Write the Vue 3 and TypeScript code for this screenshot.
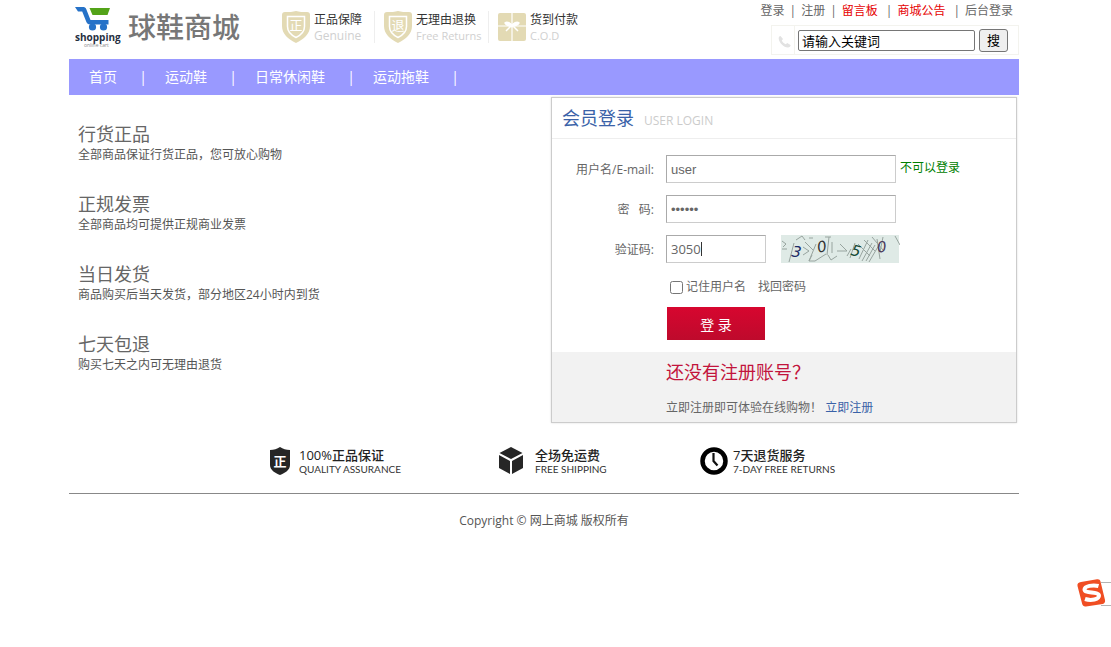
<script setup lang="ts">
import { ref } from 'vue'

interface NavLink {
  label: string
  hot?: boolean
}

const topLinks: NavLink[] = [
  { label: '登录' },
  { label: '注册' },
  { label: '留言板', hot: true },
  { label: '商城公告', hot: true },
  { label: '后台登录' },
]

const categories: string[] = ['首页', '运动鞋', '日常休闲鞋', '运动拖鞋']

const features = [
  { title: '行货正品', text: '全部商品保证行货正品，您可放心购物' },
  { title: '正规发票', text: '全部商品均可提供正规商业发票' },
  { title: '当日发货', text: '商品购买后当天发货，部分地区24小时内到货' },
  { title: '七天包退', text: '购买七天之内可无理由退货' },
]

const promises = [
  { icon: 'shield', mark: '正', title: '正品保障', sub: 'Genuine' },
  { icon: 'shield', mark: '退', title: '无理由退换', sub: 'Free Returns' },
  { icon: 'gift', mark: '', title: '货到付款', sub: 'C.O.D' },
]

const keyword = ref('请输入关键词')
const username = ref('user')
const password = ref('123456')
const code = ref('3050')
const remember = ref(false)
</script>

<template>
  <div class="page">
    <header class="header">
      <a class="brand" href="#">
        <svg class="logo" viewBox="0 0 46 42" width="46" height="42" aria-hidden="true">
          <path d="M0 1h8.500c1.500 0 2.300 1 2.800 2.200L15.500 14h18v4.500H15c-2 0-2.900-.9-3.600-2.400L7.200 5.500H3z" fill="#2672c8" />
          <path d="M14.500 2h20.500l-2.500 7H17.500z" fill="#53a318" />
          <circle cx="17.500" cy="21" r="3.600" fill="#2672c8" />
          <circle cx="28.500" cy="21" r="3.600" fill="#2672c8" />
          <text x="0" y="35" class="logo-name">shopping</text>
          <text x="9" y="41" class="logo-sub">online cart</text>
        </svg>
        <span class="brand-name">球鞋商城</span>
      </a>

      <ul class="promises">
        <li v-for="p in promises" :key="p.title">
          <svg v-if="p.icon === 'shield'" width="28" height="32" viewBox="0 0 28 32" aria-hidden="true">
            <path d="M3 1c4 0 8 0 11-1 3 1 7 1 11 1 2 0 3 1 3 3v11c0 8-6 13-14 17C6 28 0 23 0 15V4c0-2 1-3 3-3z" fill="#e3dab4" />
            <path d="M5.500 5.500h17v10c0 5-3.500 8.500-8.500 11-5-2.500-8.500-6-8.500-11z" fill="none" stroke="#fff" stroke-width="1.500" />
            <text x="14" y="19" class="shield-mark">{{ p.mark }}</text>
          </svg>
          <svg v-else width="28" height="32" viewBox="0 0 28 32" aria-hidden="true">
            <rect y="2" width="28" height="28" rx="2" fill="#e3dab4" />
            <path d="M14 2v28M0 15h28" stroke="#fff" stroke-width="1.200" />
            <path d="M14 15c-1-3-5-5-7-3 1 2 4 3 7 3 3 0 6-1 7-3-2-2-6 0-7 3zM13 15l-5 5M15 15l5 5" fill="#fff" stroke="#fff" stroke-width="1.500" />
          </svg>
          <span class="promise-text">
            <span class="promise-title">{{ p.title }}</span>
            <span class="promise-sub">{{ p.sub }}</span>
          </span>
        </li>
      </ul>

      <div class="tools">
        <nav class="top-links">
          <template v-for="(l, i) in topLinks" :key="l.label">
            <span v-if="i > 0">|</span>
            <a href="#" :class="{ hot: l.hot }">{{ l.label }}</a>
          </template>
        </nav>
        <form class="search" @submit.prevent>
          <svg width="22" height="28" viewBox="0 0 22 28" aria-hidden="true">
            <path d="M8.500 10l2.500 3-1.200 1.500c.8 1.800 2 3 4 3.800l1.400-1.300 3.300 2c.2 1.500-1 2.500-2.500 2.500-4.500-.2-8.800-4.500-9.300-9 0-1.300.6-2.300 1.800-2.500z" fill="#e2e2e2" />
          </svg>
          <input v-model="keyword" type="text" aria-label="关键词" />
          <button type="submit">搜</button>
        </form>
      </div>
    </header>

    <nav class="main-nav">
      <template v-for="c in categories" :key="c">
        <a href="#">{{ c }}</a><span>|</span>
      </template>
    </nav>

    <main class="content">
      <section class="features">
        <article v-for="f in features" :key="f.title">
          <h2>{{ f.title }}</h2>
          <p>{{ f.text }}</p>
        </article>
      </section>

      <section class="panel">
        <header class="panel-head">
          <h1>会员登录</h1>
          <span>USER LOGIN</span>
        </header>
        <form class="login" @submit.prevent>
          <div class="row">
            <label for="user">用户名/E-mail:</label>
            <input id="user" v-model="username" class="wide" type="text" />
            <span class="hint">不可以登录</span>
          </div>
          <div class="row">
            <label for="pass">密&nbsp;&nbsp;&nbsp;码:</label>
            <input id="pass" v-model="password" class="wide" type="password" />
          </div>
          <div class="row">
            <label for="code">验证码:</label>
            <span class="code-field">
              <input id="code" v-model="code" type="text" />
              <i class="caret"></i>
            </span>
            <svg class="captcha" width="119" height="28" viewBox="0 0 119 28" role="img" aria-label="验证码">
              <rect width="118" height="28" fill="#dfeae6" />
              <path d="M1 6l4 3-3 3M1 14h5M8 27l5-19M15 5l6-4 3 4M22 12l6 4-6 4M24 7l8 8M28 26l7-17M31 20l-3 6h6l11-7M46 20l2-18M51 18V7M47 20l3 5 6-4M56 16h10l-7-7M66 21l4-7M69 23l5-15M78 24l9-19M81 26l10-18M85 26l9-16M88 27l10-17M77 9l12 12M83 5l11 11M91 2l11 13M96 4l3 20M102 2l-3 15M114 1l5 9M28 3h4M44 2h6" stroke="#98a49f" fill="none" />
              <text x="11" y="22" class="digit navy" transform="rotate(9 15 16)">3</text>
              <text x="36" y="17" class="digit" transform="rotate(-12 40 12)">0</text>
              <text x="70" y="21" class="digit green" transform="rotate(14 75 16)">5</text>
              <text x="96" y="17" class="digit purple" transform="rotate(-8 101 12)">0</text>
            </svg>
          </div>
          <div class="options">
            <input id="remember" v-model="remember" type="checkbox" />
            <label for="remember">记住用户名</label>
            <a href="#">找回密码</a>
          </div>
          <button class="submit" type="submit">登 录</button>
        </form>
        <div class="register">
          <h2>还没有注册账号？</h2>
          <p>立即注册即可体验在线购物！ <a href="#">立即注册</a></p>
        </div>
      </section>
    </main>

    <ul class="services">
      <li>
        <svg width="22" height="28" viewBox="0 0 22 28" aria-hidden="true">
          <path d="M11 0c3 2 6 3 10 3v15c0 5-5 8-10 10C6 26 1 23 1 18V3c4 0 7-1 10-3z" fill="#262626" />
          <text x="11" y="19" class="dark-mark">正</text>
        </svg>
        <span><b>100%正品保证</b><small>QUALITY ASSURANCE</small></span>
      </li>
      <li>
        <svg width="26" height="28" viewBox="0 0 26 28" aria-hidden="true">
          <path d="M13 0l11.500 6L13 12 1.500 6zM1 8l11 6v13L1 21zM25 8l-11 6v13l11-6z" fill="#262626" />
        </svg>
        <span><b>全场免运费</b><small>FREE SHIPPING</small></span>
      </li>
      <li>
        <svg width="28" height="28" viewBox="0 0 28 28" aria-hidden="true">
          <circle cx="14" cy="14" r="11.500" fill="#fff" stroke="#000" stroke-width="4.500" />
          <path d="M13.500 6v8l4 4.500" fill="none" stroke="#111" stroke-width="2.200" />
        </svg>
        <span><b>7天退货服务</b><small>7-DAY FREE RETURNS</small></span>
      </li>
    </ul>

    <footer class="footer">Copyright © 网上商城 版权所有</footer>

    <svg class="ime" width="36" height="30" viewBox="0 0 36 30" aria-hidden="true">
      <path d="M26 4.500h10M26 27.500h10" stroke="#b4b4b4" />
      <path d="M6 4L22 1.200c2-.3 3 .5 3.500 2.300L30 22c.4 2-.4 3.500-2.300 4L11 28.500c-2 .3-3.300-.5-3.800-2.400L2.500 8c-.5-2.200.9-3.600 3.500-4z" fill="#f04e23" />
      <path d="M23.500 8C18 6.500 9.500 8 9.500 11.500c0 4.500 14 1.500 14.500 6 .3 4-8 5.500-14 3.500" fill="none" stroke="#fff" stroke-width="4" />
    </svg>
  </div>
</template>

<style>
body {
  margin: 0;
  background: #fff;
}
</style>

<style scoped>
.page {
  max-width: 950px;
  margin: 0 auto;
  padding-right: 23px;
  color: #666;
  font-family: "Open Sans", "Noto Sans CJK SC", sans-serif;
  font-size: 12px;
  line-height: 20px;
}

a {
  color: inherit;
  text-decoration: none;
}

ul {
  list-style: none;
  margin: 0;
  padding: 0;
}

h1,
h2,
p {
  margin: 0;
  font-weight: 400;
}

input,
button {
  box-sizing: border-box;
  font-family: inherit;
  margin: 0;
}

.header {
  display: flex;
  align-items: flex-start;
  height: 59px;
}

.brand {
  display: flex;
  gap: 7px;
  padding: 6px 0 0 6px;
}

.logo-name {
  font: 700 10px "Open Sans", sans-serif;
  fill: #26303f;
}

.logo-sub {
  font: 5px "Open Sans", sans-serif;
  fill: #888;
}

.brand-name {
  font-size: 28px;
  line-height: 42px;
  font-weight: 500;
  color: #777;
}

.promises {
  display: grid;
  grid-template-columns: 102px 114px auto;
  margin: 11px 0 0 42px;
}

.promises li {
  display: flex;
  gap: 4px;
  margin-right: 9px;
  border-right: 1px solid #eee;
}

.promises li:last-child {
  border-right: 0;
}

.promise-text {
  display: flex;
  flex-direction: column;
}

.promise-title {
  color: #333;
  line-height: 18px;
}

.promise-sub {
  color: #d0d0d0;
  font-size: 11px;
  line-height: 13px;
}

.promises li:first-child .promise-sub {
  font-size: 12px;
}

.shield-mark {
  font: 13px "Noto Sans CJK SC", sans-serif;
  fill: #fff;
  text-anchor: middle;
}

.tools {
  display: flex;
  flex-direction: column;
  align-items: flex-end;
  margin-left: auto;
}

.top-links {
  display: flex;
  gap: 5px;
  padding-right: 6px;
  height: 25px;
  line-height: 21px;
}

.hot {
  color: #e60000;
}

.top-links .hot + span {
  padding-left: 3px;
}

.search {
  display: flex;
  align-items: center;
  box-sizing: border-box;
  height: 30px;
  padding-right: 10px;
  border: 1px solid #f3f3ee;
}

.search svg {
  border-right: 1px solid #f3f3ee;
  margin-right: 3px;
}

.search input {
  width: 177px;
  height: 21px;
  padding: 0 3px;
  border: 1px solid #767676;
  border-radius: 2px;
  color: #000;
  font-size: 13px;
}

.search button {
  width: 29px;
  height: 23px;
  margin-left: 4px;
  padding: 0;
  border: 1px solid #767676;
  border-radius: 3px;
  background: #efefef;
  color: #000;
  font-size: 13px;
  line-height: 20px;
}

.main-nav {
  display: flex;
  height: 36px;
  background: #9999ff;
  color: #fff;
  font-size: 14px;
  line-height: 36px;
}

.main-nav a {
  padding: 0 24px 0 20px;
}

.main-nav span {
  width: 4px;
  display: flex;
  justify-content: center;
}

.content {
  display: grid;
  grid-template-columns: 482fr 466fr;
  padding: 2px 2px 0 0;
}

.features {
  display: flex;
  flex-direction: column;
  gap: 28px;
  padding: 26px 0 0 9px;
}

.features h2 {
  font-size: 18px;
  line-height: 22px;
}

.features p {
  line-height: 20px;
  color: #555;
}

.panel {
  border: 1px solid #ccc;
  box-shadow: 0 0 2px #ddd;
}

.panel-head {
  display: flex;
  align-items: center;
  gap: 10px;
  height: 40px;
  padding-left: 10px;
  border-bottom: 1px solid #eee;
}

.panel-head h1 {
  color: #3a62a8;
  font-size: 18px;
}

.panel-head span {
  color: #ccc;
  padding-top: 6px;
}

.login {
  padding: 16px 0 12px;
}

.row {
  display: flex;
  align-items: center;
  height: 28px;
  margin-bottom: 12px;
}

.row label {
  width: 102px;
  margin-right: 12px;
  padding-top: 2px;
  text-align: right;
}

.row input {
  width: 100px;
  height: 28px;
  padding: 0 4px;
  border: 1px solid #ccc;
  border-top-color: #aaa;
  border-left-color: #aaa;
  background: #fff;
  color: #666;
  font-size: 13px;
}

.row .wide {
  width: 230px;
  font-family: "Liberation Sans", sans-serif;
}

.hint {
  margin-left: 4px;
  padding-bottom: 2px;
  color: #008000;
}

.code-field {
  position: relative;
  display: flex;
}

.caret {
  position: absolute;
  left: 35px;
  top: 7px;
  width: 1px;
  height: 14px;
  background: #333;
}

.captcha {
  margin-left: 15px;
}

.digit {
  font: italic 15px "DejaVu Sans", sans-serif;
  fill: #333;
}

.navy {
  fill: #1c2c66;
}

.green {
  fill: #174a35;
}

.purple {
  fill: #4a3a5c;
}

.options {
  display: flex;
  align-items: center;
  height: 20px;
  margin-bottom: 10px;
  padding: 2px 0 0 118px;
}

.options input {
  width: 13px;
  height: 13px;
  margin-right: 3px;
}

.options a {
  margin-left: 12px;
}

.submit {
  display: block;
  width: 98px;
  height: 33px;
  margin-left: 115px;
  padding: 0;
  border: 0;
  background: linear-gradient(#d7062f, #be0a2c);
  color: #fff;
  font-size: 14px;
}

.register {
  height: 70px;
  padding-left: 114px;
  background: #f2f2f2;
}

.register h2 {
  color: #c2143c;
  font-size: 18px;
  line-height: 40px;
}

.register p {
  line-height: 32px;
}

.register a {
  color: #3a62a8;
}

.services {
  display: grid;
  grid-template-columns: 229px 202px auto;
  padding: 24px 0 17px 200px;
  border-bottom: 1px solid #888;
}

.services li {
  display: flex;
  gap: 8px;
}

.services li:nth-child(2) {
  gap: 11px;
}

.services li:last-child {
  gap: 5px;
}

.services span {
  display: flex;
  flex-direction: column;
}

.services b {
  color: #222;
  font-size: 13px;
  font-weight: 500;
  line-height: 16px;
}

.services small {
  color: #333;
  font-family: Lato, sans-serif;
  font-size: 10px;
  line-height: 13px;
}

.dark-mark {
  font: 700 13px "Noto Sans CJK SC", sans-serif;
  fill: #fff;
  text-anchor: middle;
}

.footer {
  padding-top: 17px;
  text-align: center;
  color: #555;
}

.ime {
  position: fixed;
  right: 0;
  bottom: 39px;
}
</style>
